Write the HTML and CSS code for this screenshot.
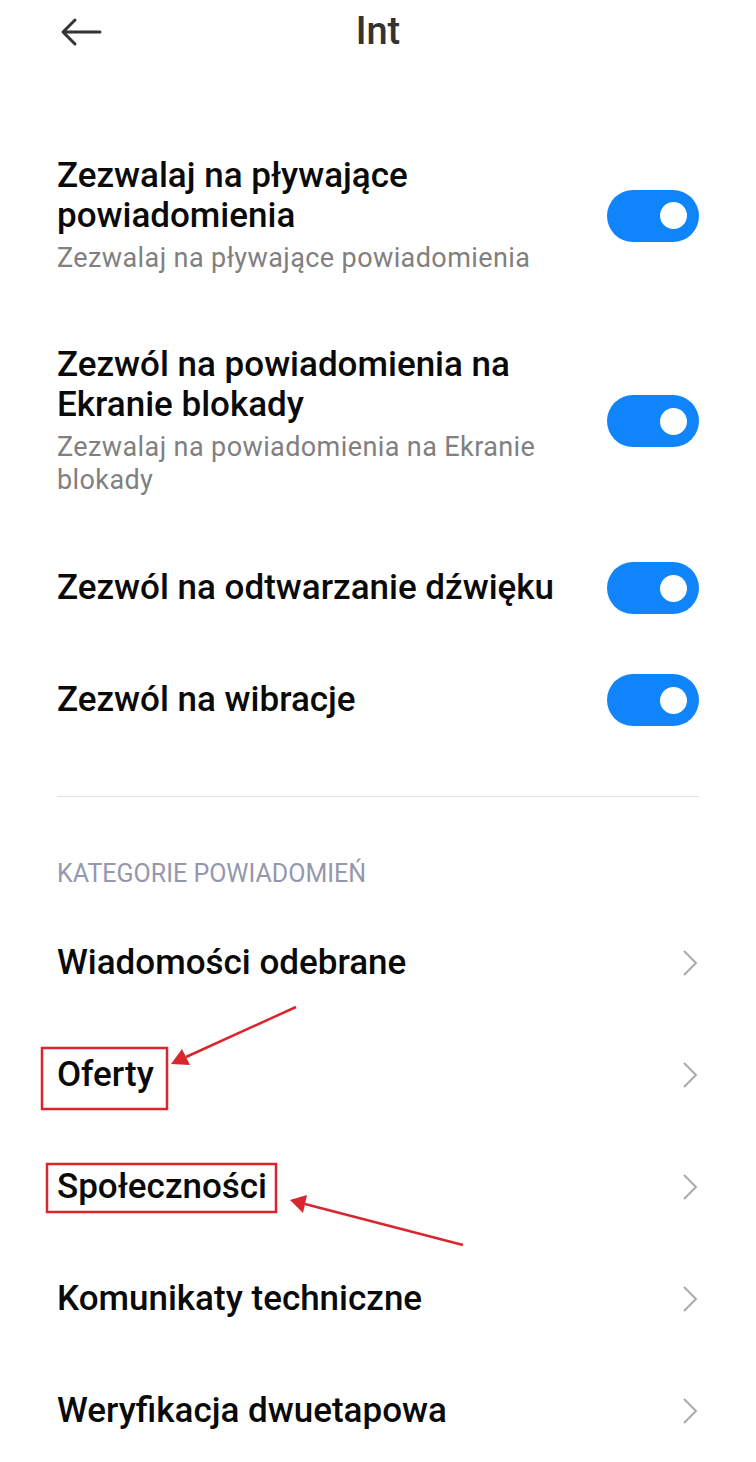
FILE: index.html
```html
<!DOCTYPE html>
<html lang="pl">
<head>
<meta charset="utf-8">
<title>Int</title>
<link rel="stylesheet" href="styles.css">
</head>
<body>
<div class="page">
  <header class="topbar">
    <svg class="back" width="42" height="30" viewBox="0 0 42 30">
      <path d="M40 15H4M15 3L3 15L15 27" fill="none" stroke="#333" stroke-width="3" stroke-linecap="round" stroke-linejoin="round"/>
    </svg>
    <h1 class="title">Int</h1>
  </header>

  <section class="toggles">
    <div class="row">
      <div class="text">
        <div class="label">Zezwalaj na pływające<br>powiadomienia</div>
        <div class="sub">Zezwalaj na pływające powiadomienia</div>
      </div>
      <span class="switch"><span class="knob"></span></span>
    </div>
    <div class="row">
      <div class="text">
        <div class="label">Zezwól na powiadomienia na<br>Ekranie blokady</div>
        <div class="sub">Zezwalaj na powiadomienia na Ekranie<br>blokady</div>
      </div>
      <span class="switch"><span class="knob"></span></span>
    </div>
    <div class="row">
      <div class="text">
        <div class="label">Zezwól na odtwarzanie dźwięku</div>
      </div>
      <span class="switch"><span class="knob"></span></span>
    </div>
    <div class="row">
      <div class="text">
        <div class="label">Zezwól na wibracje</div>
      </div>
      <span class="switch"><span class="knob"></span></span>
    </div>
  </section>

  <hr class="divider">

  <h2 class="section">KATEGORIE POWIADOMIEŃ</h2>

  <section class="categories">
    <div class="item"><span class="label">Wiadomości odebrane</span><svg class="chev" width="16" height="28" viewBox="0 0 16 28"><path d="M2 2L14 14L2 26" fill="none" stroke="#ababab" stroke-width="2"/></svg></div>
    <div class="item"><span class="label">Oferty</span><svg class="chev" width="16" height="28" viewBox="0 0 16 28"><path d="M2 2L14 14L2 26" fill="none" stroke="#ababab" stroke-width="2"/></svg></div>
    <div class="item"><span class="label">Społeczności</span><svg class="chev" width="16" height="28" viewBox="0 0 16 28"><path d="M2 2L14 14L2 26" fill="none" stroke="#ababab" stroke-width="2"/></svg></div>
    <div class="item"><span class="label">Komunikaty techniczne</span><svg class="chev" width="16" height="28" viewBox="0 0 16 28"><path d="M2 2L14 14L2 26" fill="none" stroke="#ababab" stroke-width="2"/></svg></div>
    <div class="item"><span class="label">Weryfikacja dwuetapowa</span><svg class="chev" width="16" height="28" viewBox="0 0 16 28"><path d="M2 2L14 14L2 26" fill="none" stroke="#ababab" stroke-width="2"/></svg></div>
  </section>

  <svg class="annot" width="756" height="1462" viewBox="0 0 756 1462">
    <rect x="42" y="1048" width="125" height="61" fill="none" stroke="#d9262e" stroke-width="2.5"/>
    <rect x="47" y="1164" width="229" height="48" fill="none" stroke="#d9262e" stroke-width="2.5"/>
    <line x1="296" y1="1007" x2="186" y2="1057" stroke="#d9262e" stroke-width="2.5"/>
    <polygon points="171,1064 182,1049 190,1065" fill="#d9262e"/>
    <line x1="463" y1="1245" x2="305" y2="1204" stroke="#d9262e" stroke-width="2.5"/>
    <polygon points="290,1200 307,1195 303,1213" fill="#d9262e"/>
  </svg>
</div>
</body>
</html>
```

FILE: styles.css
```css
* { box-sizing: border-box; }

html, body {
  margin: 0;
  padding: 0;
  background: #ffffff;
}

body {
  font-family: Roboto, "Liberation Sans", Arial, sans-serif;
  color: #000;
}

.page {
  position: relative;
  width: 756px;
  min-height: 1462px;
  overflow: hidden;
}

.topbar {
  position: relative;
  height: 62px;
  display: flex;
  align-items: center;
  justify-content: center;
}

.back {
  position: absolute;
  left: 60px;
  top: 17px;
}

.title {
  margin: 0;
  font-size: 38px;
  font-weight: 500;
  line-height: 62px;
  color: #333;
}

.toggles {
  padding-top: 59px;
}

.row {
  display: flex;
  align-items: center;
  justify-content: space-between;
  padding: 30px 57px;
}

.text {
  display: flex;
  flex-direction: column;
  gap: 6px;
  padding: 5px 0;
}

.label {
  font-size: 35px;
  font-weight: 500;
  line-height: 40px;
  color: #0a0a0a;
  white-space: nowrap;
}

.sub {
  font-size: 27px;
  letter-spacing: 0.4px;
  line-height: 33px;
  color: #808080;
  white-space: nowrap;
}

.switch {
  position: relative;
  flex: none;
  width: 92px;
  height: 52px;
  border-radius: 26px;
  background: #0f84fb;
}

.knob {
  position: absolute;
  right: 12px;
  top: 12.5px;
  width: 27px;
  height: 27px;
  border-radius: 50%;
  background: #fff;
}

.divider {
  margin: 40px 57px 0;
  border: 0;
  height: 1px;
  background: #e3e3e3;
}

.section {
  margin: 62px 57px 0;
  font-size: 25px;
  font-weight: 400;
  line-height: 30px;
  color: #9597ad;
}

.categories {
  padding-top: 18px;
}

.item {
  display: flex;
  align-items: center;
  justify-content: space-between;
  padding: 36px 57px 36px 57px;
}

.item .label {
  line-height: 40px;
}

.chev {
  flex: none;
  margin-right: 1px;
}

.annot {
  position: absolute;
  left: 0;
  top: 0;
  pointer-events: none;
}
```
